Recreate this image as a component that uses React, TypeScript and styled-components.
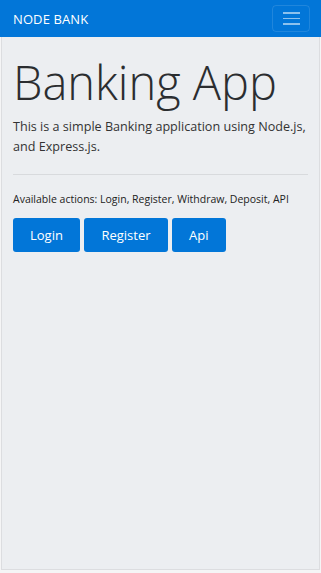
import React from "react";
import styled, { createGlobalStyle } from "styled-components";

const Global = createGlobalStyle`
  html, body { margin: 0; padding: 0; }
  body {
    background: #f5f5f6;
    font-family: "Open Sans", "Noto Sans", sans-serif;
    color: #212529;
  }
`;

const Page = styled.div`
  width: 321px;
  min-height: 573px;
  display: flex;
  flex-direction: column;
`;

const NavBar = styled.nav`
  height: 37px;
  background: #0276d8;
  display: flex;
  align-items: center;
  justify-content: space-between;
  padding: 0 11px 0 13px;
  box-sizing: border-box;
`;

const Brand = styled.span`
  color: #fff;
  font-size: 13px;
  letter-spacing: 0.1px;
`;

const Toggler = styled.button`
  width: 38px;
  height: 27px;
  border: 1px solid rgba(255, 255, 255, 0.12);
  border-radius: 4px;
  background: transparent;
  display: flex;
  flex-direction: column;
  align-items: center;
  justify-content: center;
  gap: 4px;
  padding: 0;
`;

const Bar = styled.span`
  width: 17px;
  height: 1.5px;
  background: rgba(255, 255, 255, 0.55);
`;

const Jumbo = styled.main`
  margin: 0 1px;
  height: 533px;
  box-sizing: border-box;
  border: 1px solid #dcdde0;
  border-top: none;
  background: #eceef1;
  padding: 14px 11px 0 11px;
`;

const Title = styled.h1`
  margin: 0;
  font-weight: 300;
  font-size: 47px;
  line-height: 62px;
  color: #2b2d30;
`;

const Lead = styled.p`
  margin: 4px 0 0;
  font-size: 12.6px;
  line-height: 20px;
  color: #333;
  white-space: nowrap;
`;

const Rule = styled.hr`
  border: none;
  border-top: 1px solid #d8dadd;
  margin: 17px 0 16px;
`;

const Small = styled.p`
  margin: 0;
  font-size: 10.5px;
  line-height: 16px;
  color: #222;
`;

const Actions = styled.div`
  display: flex;
  gap: 4px;
  margin-top: 11px;
`;

const Btn = styled.button<{ $pad: number }>`
  height: 34px;
  padding: 0 ${(p) => p.$pad}px;
  border: none;
  border-radius: 3px;
  background: #0276d8;
  color: #fff;
  font-family: inherit;
  font-size: 13px;
`;

export default function App() {
  return (
    <>
      <Global />
      <Page>
        <NavBar>
          <Brand>NODE BANK</Brand>
          <Toggler aria-label="menu">
            <Bar />
            <Bar />
            <Bar />
          </Toggler>
        </NavBar>
        <Jumbo>
          <Title>Banking App</Title>
          <Lead>
            This is a simple Banking application using Node.js,
            <br />
            and Express.js.
          </Lead>
          <Rule />
          <Small>Available actions: Login, Register, Withdraw, Deposit, API</Small>
          <Actions>
            <Btn $pad={17}>Login</Btn>
            <Btn $pad={17.5}>Register</Btn>
            <Btn $pad={17}>Api</Btn>
          </Actions>
        </Jumbo>
      </Page>
    </>
  );
}
